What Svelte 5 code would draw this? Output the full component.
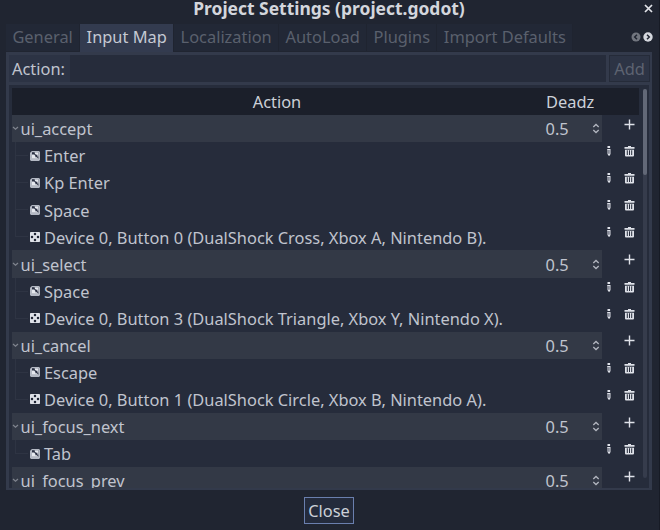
<script>
  const tabs = [
    { name: "General" },
    { name: "Input Map", active: true },
    { name: "Localization" },
    { name: "AutoLoad" },
    { name: "Plugins" },
    { name: "Import Defaults" }
  ];

  const actions = [
    {
      name: "ui_accept",
      events: [
        { type: "key", text: "Enter" },
        { type: "key", text: "Kp Enter" },
        { type: "key", text: "Space" },
        { type: "joy", text: "Device 0, Button 0 (DualShock Cross, Xbox A, Nintendo B)." }
      ]
    },
    {
      name: "ui_select",
      events: [
        { type: "key", text: "Space" },
        { type: "joy", text: "Device 0, Button 3 (DualShock Triangle, Xbox Y, Nintendo X)." }
      ]
    },
    {
      name: "ui_cancel",
      events: [
        { type: "key", text: "Escape" },
        { type: "joy", text: "Device 0, Button 1 (DualShock Circle, Xbox B, Nintendo A)." }
      ]
    },
    { name: "ui_focus_next", events: [{ type: "key", text: "Tab" }] },
    { name: "ui_focus_prev", events: [] }
  ];

  let deadzone = "0.5";
</script>

<div class="dialog">
  <header class="title">
    <h1>Project Settings (project.godot)</h1>
    <svg class="close-x" width="9" height="9" viewBox="0 0 9 9"><path d="M1 1l7 7M8 1l-7 7" /></svg>
  </header>

  <nav class="tabs">
    {#each tabs as tab}
      <span class="tab" class:active={tab.active}>{tab.name}</span>
    {/each}
    <svg class="arrows" width="22" height="10" viewBox="0 0 22 10">
      <circle cx="5" cy="5" r="4.5" fill="#72767f" />
      <path d="M6 2.7L3.7 5L6 7.3" />
      <circle cx="17" cy="5" r="4.7" fill="#d5d8de" />
      <path d="M16 2.7L18.3 5L16 7.3" />
    </svg>
  </nav>

  <section class="panel">
    <div class="bar">
      <span class="label">Action:</span>
      <div class="field"></div>
      <div class="add">Add</div>
    </div>

    <div class="tree">
      <div class="content">
        <div class="head">
          <span class="col-action">Action</span>
          <span class="col-dead">Deadz</span>
        </div>
        {#each actions as action}
          <div class="row">
            <div class="cells group">
              <svg class="fold" width="7" height="5" viewBox="0 0 7 5"><path d="M1 1l2.5 2.3L6 1" /></svg>
              <span class="name">{action.name}</span>
              <span class="value">{deadzone}</span>
              <svg class="spin" width="8" height="11" viewBox="0 0 8 11">
                <path d="M1.3 3.9L4 1.4l2.7 2.5M1.3 7.1L4 9.6l2.7-2.5" />
              </svg>
            </div>
            <svg class="plus" width="11" height="11" viewBox="0 0 11 11"><path d="M5.5 0.5v10M0.5 5.5h10" /></svg>
          </div>
          {#each action.events as event, i}
            <div class="row">
              <div class="cells event" class:last={i === action.events.length - 1}>
                {#if event.type === "key"}
                  <svg class="icon" width="10" height="10" viewBox="0 0 10 10">
                    <path fill="#b4b9c4" d="M1 0.7L2 0H9L10 1V9L9 10H1L0 9V1.7z" />
                    <path fill="#2b3144" d="M2 1.2h6.4v6.6H2z" />
                    <path fill="#e6e9ef" d="M4.6 1.2h3.8v2.6H6.4L5 3zM2 3.6h2.2L5.4 5v1.2h1.4l1.6 1.6H2zM7.4 3.6h1v2h-1z" />
                  </svg>
                {:else}
                  <svg class="icon" width="10" height="10" viewBox="0 0 10 10">
                    <rect width="10" height="10" rx="0.8" fill="#dee1e8" />
                    <g fill="#202636">
                      <circle cx="5" cy="2.1" r="1.25" />
                      <circle cx="2" cy="5" r="1.25" />
                      <circle cx="8" cy="5" r="1.25" />
                      <circle cx="5" cy="7.9" r="1.25" />
                    </g>
                  </svg>
                {/if}
                <span class="text">{event.text}</span>
              </div>
              <svg class="edit" width="4" height="10" viewBox="0 0 4 10">
                <path fill="#dfe2e9" d="M0.5 0h2.6v2H0.5zM0.2 3h3.3v5L2.6 9.8H1.6L0.5 8V4H0.2z" />
                <path fill="#30374a" d="M1.5 4h0.9v3.7H1.5z" />
              </svg>
              <svg class="trash" width="11" height="11" viewBox="0 0 11 11">
                <path fill="#dfe2e9" d="M4 0h3v1h3.5v1.8H0.5V1H4z" />
                <path fill="#dfe2e9" fill-rule="evenodd" d="M1 3.8h9V9.5Q10 10.5 9 10.5H2Q1 10.5 1 9.5ZM2.8 4.3V9H3.8V4.3ZM5 4.3V9H6V4.3ZM7.2 4.3V9H8.2V4.3Z" />
              </svg>
            </div>
          {/each}
        {/each}
      </div>
      <div class="scroll"><div class="grabber"></div></div>
    </div>
  </section>

  <footer>
    <button>Close</button>
  </footer>
</div>

<style>
  :global(body) {
    margin: 0;
    background: #202531;
  }
  .dialog {
    box-sizing: border-box;
    width: 660px;
    height: 530px;
    padding: 0 7px 0 6px;
    overflow: hidden;
    display: flex;
    flex-direction: column;
    background: #202531;
    border-right: 1px solid #171b25;
    color: #c0c4ce;
    font: 16.4px/27px "Noto Sans", sans-serif;
    white-space: nowrap;
  }
  svg {
    display: block;
    flex: none;
    fill: none;
  }
  .title {
    position: relative;
    height: 24px;
    flex: none;
  }
  h1 {
    margin: 0;
    font-size: 17.45px;
    font-weight: 700;
    line-height: 17px;
    text-align: center;
    color: #d3d6dc;
  }
  .close-x {
    position: absolute;
    right: -1px;
    top: 4px;
    stroke: #e2e4e9;
    stroke-width: 1.7;
  }
  .tabs {
    display: flex;
    flex: none;
    height: 28px;
    align-items: stretch;
  }
  .tab {
    box-sizing: border-box;
    height: 27px;
    padding: 0 6.4px;
    line-height: 26px;
    background: #222836;
    border-right: 1px solid #1f2430;
    color: #5a606d;
  }
  .tab.active {
    height: 28px;
    background: #333b4f;
    color: #c5c9d3;
  }
  .arrows {
    margin: 8px -1px 0 auto;
  }
  .arrows path {
    stroke: #202531;
    stroke-width: 1.5;
  }
  .panel {
    box-sizing: border-box;
    width: 646px;
    height: 438px;
    flex: none;
    padding: 3px 3px 2px;
    background: #333a4b;
    display: flex;
    flex-direction: column;
    gap: 3px;
  }
  .bar {
    display: flex;
    height: 27px;
    flex: none;
  }
  .label {
    width: 61px;
    box-sizing: border-box;
    padding-left: 3px;
    background: #2c3344;
    line-height: 28px;
  }
  .field {
    flex: 1;
    background: #262c3b;
  }
  .add {
    box-sizing: border-box;
    width: 41px;
    margin: 0 -1px 0 3px;
    border: 1px solid #252b39;
    background: #2d3445;
    color: #5d6371;
    line-height: 26px;
    text-align: center;
  }
  .tree {
    box-sizing: border-box;
    height: 403px;
    padding: 3px 0 0 3px;
    display: flex;
    background: #262c3b;
    overflow: hidden;
  }
  .content {
    width: 627px;
    overflow: hidden;
  }
  .head {
    display: flex;
    height: 27px;
    background: #1b1f2a;
    color: #ccd0d8;
    line-height: 28px;
  }
  .col-action {
    width: 530px;
    text-align: center;
  }
  .col-dead {
    padding-left: 4px;
  }
  .row {
    display: flex;
    height: 27.1px;
  }
  .cells {
    width: 590px;
    display: flex;
    align-items: center;
  }
  .group {
    background: #333946;
  }
  .fold {
    stroke: #80858f;
    stroke-width: 1.2;
  }
  .name,
  .value,
  .text {
    padding-top: 0.4px;
  }
  .name {
    width: 525px;
    padding-left: 1.5px;
  }
  .spin {
    margin-left: auto;
    margin-right: 2px;
    stroke: #b2b6bf;
    stroke-width: 1.3;
  }
  .plus {
    margin: 3.5px 0 0 22px;
    stroke: #dfe2e9;
    stroke-width: 1.4;
  }
  .event {
    /* guide line down to each child item */
    background:
      linear-gradient(#2e3443, #2e3443) 3px 0 / 1px 100% no-repeat,
      linear-gradient(#2e3443, #2e3443) 3px 13px / 13px 1px no-repeat;
  }
  .event.last {
    background:
      linear-gradient(#2e3443, #2e3443) 3px 0 / 1px 13px no-repeat,
      linear-gradient(#2e3443, #2e3443) 3px 13px / 13px 1px no-repeat;
  }
  .icon {
    margin: 0 4px 0 18px;
  }
  .edit {
    margin: 4px 0 0 5px;
  }
  .trash {
    margin: 4px 0 0 13px;
  }
  .scroll {
    width: 4px;
    height: 389px;
    margin: 1px 0 0 4px;
    background: #363c4c;
    border-radius: 2px;
  }
  .grabber {
    height: 86px;
    border-radius: 2px;
    background: #626877;
  }
  footer {
    display: flex;
    justify-content: center;
    padding-top: 7px;
  }
  button {
    box-sizing: border-box;
    width: 50px;
    height: 27px;
    padding: 0;
    border: 1px solid #6a7fae;
    background: #242b3c;
    color: #ccd0d8;
    font: inherit;
    line-height: 26px;
  }
</style>
